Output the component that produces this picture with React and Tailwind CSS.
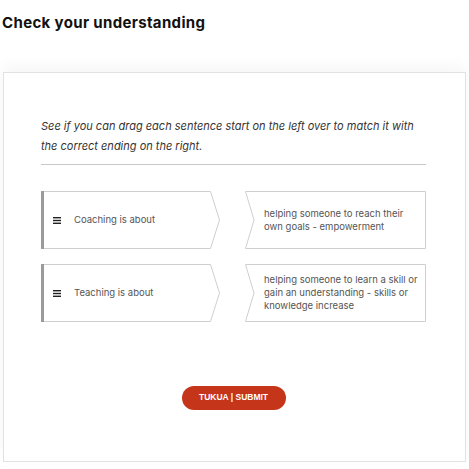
import React from 'react';

const ITEMS = [
  { start: 'Coaching is about', end: 'helping someone to reach their own goals - empowerment' },
  { start: 'Teaching is about', end: 'helping someone to learn a skill or gain an understanding - skills or knowledge increase' },
];

function StartCard({ text }) {
  return (
    <div className="relative w-[179px] h-[58px] flex items-center">
      <svg className="absolute inset-0" width="179" height="58" viewBox="0 0 179 58">
        <polygon points="1,0.5 169.5,0.5 178.5,29 169.5,57.5 1,57.5" fill="#fff" stroke="#cfcfcf" strokeWidth="1" />
        <rect x="0" y="0" width="3" height="58" fill="#9b9b9b" />
      </svg>
      <div className="relative flex items-center pl-[12px] pt-[1px]">
        <svg width="8" height="7" viewBox="0 0 8 7" className="mr-[13px]">
          <rect x="0" y="0" width="8" height="1.4" fill="#222" />
          <rect x="0" y="2.8" width="8" height="1.4" fill="#222" />
          <rect x="0" y="5.6" width="8" height="1.4" fill="#222" />
        </svg>
        <span className="text-[9.5px] text-[#555]">{text}</span>
      </div>
    </div>
  );
}

function EndCard({ text }) {
  return (
    <div className="relative w-[181px] h-[58px] flex items-center">
      <svg className="absolute inset-0" width="181" height="58" viewBox="0 0 181 58">
        <polygon points="0.5,0.5 180.5,0.5 180.5,57.5 0.5,57.5 9,29" fill="#fff" stroke="#cfcfcf" strokeWidth="1" />
      </svg>
      <p className="relative pl-[19px] pr-[6px] text-[9.5px] leading-[13px] text-[#555]">{text}</p>
    </div>
  );
}

export default function App() {
  return (
    <div className="w-[469px] h-[469px] bg-white overflow-hidden" style={{ fontFamily: 'Inter, "Noto Sans", sans-serif' }}>
      <h1 className="pl-[2px] pt-[12px] text-[15px] font-bold text-[#111] tracking-[0.35px]">Check your understanding</h1>

      <div className="mt-[37px] mx-[3px] h-[390px] border border-[#e2e2e2] shadow-[0_-6px_14px_rgba(0,0,0,0.04)] pl-[37px] pr-[39px] pt-[43px]">
        <p className="italic text-[11px] leading-[20px] text-[#333] pb-[8px] border-b border-[#c8c8c8]">
          See if you can drag each sentence start on the left over to match it with the correct ending on the right.
        </p>

        <div className="mt-[26px] flex flex-col gap-[15px]">
          {ITEMS.map((it) => (
            <div key={it.start} className="flex justify-between">
              <StartCard text={it.start} />
              <EndCard text={it.end} />
            </div>
          ))}
        </div>

        <div className="mt-[64px] flex justify-center">
          <button className="w-[104px] h-[24px] rounded-full bg-[#c4351a] text-white text-[8.5px] font-bold" style={{ fontFamily: '"Liberation Sans Narrow", "Liberation Sans", sans-serif' }}>
            TUKUA | SUBMIT
          </button>
        </div>
      </div>
    </div>
  );
}
